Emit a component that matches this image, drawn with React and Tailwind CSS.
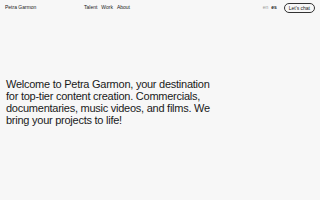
import React from "react";

const App = () => {
    return (
        <div
            className="w-[320px] h-[200px] bg-[#f7f7f7] text-[#1a1a1a] overflow-hidden flex flex-col"
            style={{ fontFamily: "'Liberation Sans', Arial, sans-serif" }}
        >
            {/* Header */}
            <header className="flex items-center px-[5px] pt-[2px] h-[14px] text-[5px]">
                <div className="w-[79px]">Petra Garmon</div>
                <nav className="flex gap-[4px]">
                    <span>Talent</span>
                    <span>Work</span>
                    <span>About</span>
                </nav>
                <div className="flex items-center gap-[3px] ml-auto">
                    <span className="text-[#9a9a9a]">en</span>
                    <span className="font-semibold">es</span>
                    <button className="ml-[4px] h-[10px] px-[4px] rounded-full border-[0.5px] border-[#333] leading-none">
                        Let's chat
                    </button>
                </div>
            </header>

            {/* Hero text */}
            <main className="px-[6px] mt-[64px]">
                <h1 className="w-[214px] text-[11px] leading-[12px] tracking-[-0.25px] font-normal">
                    Welcome to Petra Garmon, your destination for top-tier content creation. Commercials,
                    documentaries, music videos, and films. We bring your projects to life!
                </h1>
            </main>
        </div>
    );
};

export default App;
